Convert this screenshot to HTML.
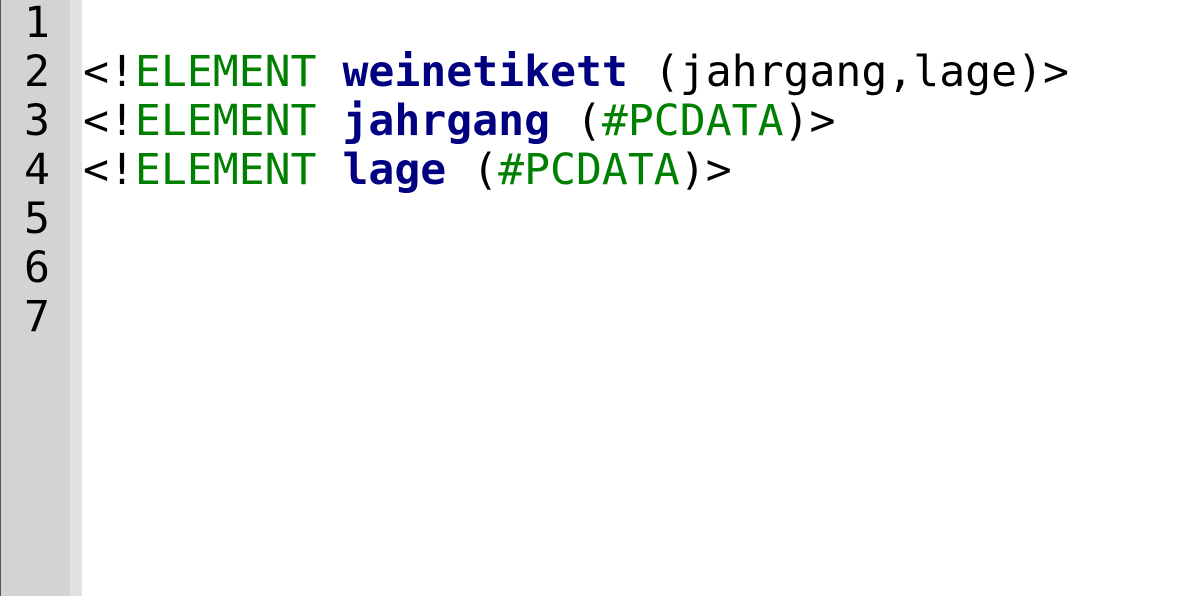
<!DOCTYPE html>
<html><head><style>
html,body{margin:0;padding:0;width:1199px;height:596px;overflow:hidden;background:#fff;}
.g{position:absolute;left:0;top:0;width:70px;height:596px;background:#d3d3d3;border-left:1px solid #555;box-sizing:border-box;}
.g2{position:absolute;left:70px;top:0;width:12px;height:596px;background:#e2e2e2;}
.ln,.code{position:absolute;top:-1px;font-family:"DejaVu Sans Mono",monospace;font-size:43.1px;line-height:49px;white-space:pre;color:#000;}
.ln{left:0;width:50px;text-align:right;}
.code{left:83px;}
.k{color:#008000}.e{color:#000080;font-weight:bold}
</style></head><body>
<div class="g"></div><div class="g2"></div>
<div class="ln">1
2
3
4
5
6
7</div>
<div class="code">
&lt;!<span class="k">ELEMENT</span> <span class="e">weinetikett</span> (jahrgang,lage)&gt;
&lt;!<span class="k">ELEMENT</span> <span class="e">jahrgang</span> (<span class="k">#PCDATA</span>)&gt;
&lt;!<span class="k">ELEMENT</span> <span class="e">lage</span> (<span class="k">#PCDATA</span>)&gt;
</div>
</body></html>
